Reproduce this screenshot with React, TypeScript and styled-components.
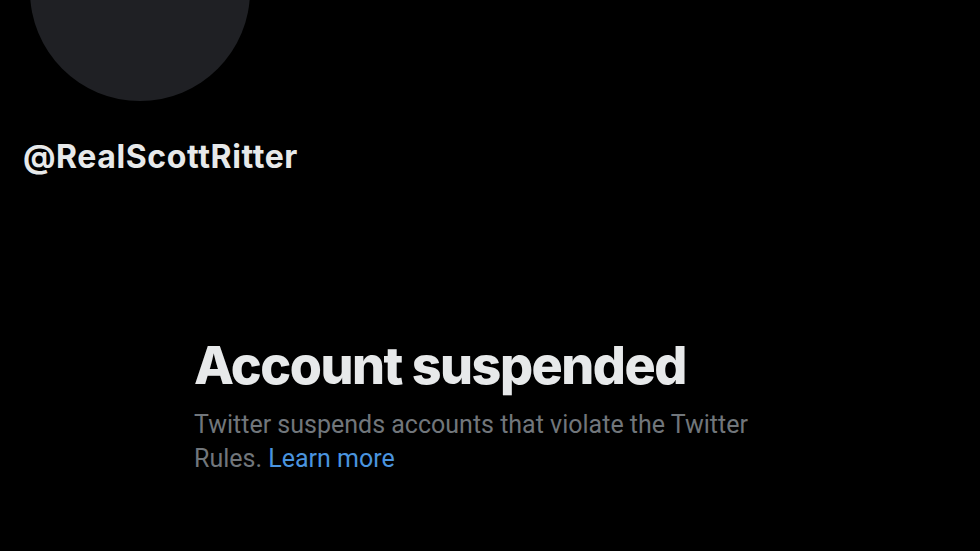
import React from "react";
import styled, { createGlobalStyle } from "styled-components";

const Global = createGlobalStyle`
  html, body { margin: 0; padding: 0; background: #000; }
  #root { width: 980px; height: 551px; overflow: hidden; }
`;

const Page = styled.div`
  width: 980px;
  height: 551px;
  background: #000;
  display: flex;
  flex-direction: column;
  overflow: hidden;
`;

const Avatar = styled.div`
  width: 220px;
  height: 220px;
  border-radius: 50%;
  background: #1f2024;
  margin-top: -119px;
  margin-left: 30px;
  flex-shrink: 0;
`;

const Handle = styled.div`
  margin-top: 37px;
  margin-left: 23px;
  font-family: Inter, "Liberation Sans", sans-serif;
  font-weight: 700;
  font-size: 32px;
  line-height: 38px;
  color: #e7e9ea;
  letter-spacing: 0.6px;
`;

const Notice = styled.div`
  margin-top: 159px;
  margin-left: 194px;
  display: flex;
  flex-direction: column;
  gap: 11px;
`;

const Title = styled.h1`
  margin: 0;
  font-family: Inter, "Liberation Sans", sans-serif;
  font-weight: 800;
  font-size: 52px;
  line-height: 62px;
  color: #e7e9ea;
  letter-spacing: -1.5px;
`;

const Body = styled.p`
  margin: 0;
  width: 580px;
  font-family: Roboto, "Liberation Sans", sans-serif;
  font-weight: 400;
  font-size: 25px;
  line-height: 34px;
  color: #71767b;
`;

const Link = styled.a`
  color: #4a94df;
  text-decoration: none;
`;

export default function App() {
  return (
    <>
      <Global />
      <Page>
        <Avatar />
        <Handle>@RealScottRitter</Handle>
        <Notice>
          <Title>Account suspended</Title>
          <Body>
            Twitter suspends accounts that violate the Twitter Rules.{" "}
            <Link href="#">Learn more</Link>
          </Body>
        </Notice>
      </Page>
    </>
  );
}
